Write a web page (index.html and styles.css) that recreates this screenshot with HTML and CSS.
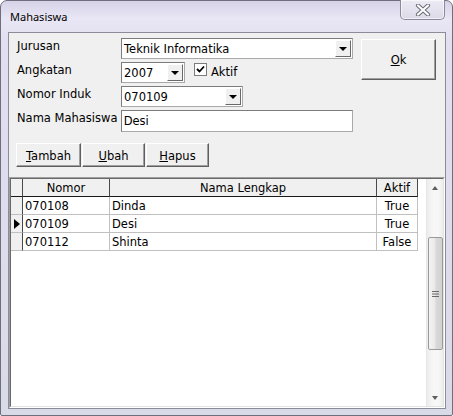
FILE: index.html
```html
<!DOCTYPE html>
<html lang="id">
<head>
    <meta charset="UTF-8">
    <title>Mahasiswa</title>
    <link rel="stylesheet" href="styles.css">
</head>
<body>
<div class="window">
    <div class="titlebar">
        <span class="title">Mahasiswa</span>
        <div class="close">
            <svg width="16" height="12" viewBox="0 0 16 12">
                <path d="M3 1.5 L13 10.5 M13 1.5 L3 10.5" stroke="#6d6d78" stroke-width="4.2" stroke-linecap="round"/>
                <path d="M3 1.5 L13 10.5 M13 1.5 L3 10.5" stroke="#fdfdff" stroke-width="2.2" stroke-linecap="round"/>
            </svg>
        </div>
    </div>
    <div class="client">
        <!--form isian-->
        <div class="form">
            <div class="fields">
                <div class="row">
                    <label class="lbl">Jurusan</label>
                    <div class="combo w-jurusan"><span class="val">Teknik Informatika</span><span class="drop"></span></div>
                </div>
                <div class="row">
                    <label class="lbl">Angkatan</label>
                    <div class="combo w-tahun"><span class="val">2007</span><span class="drop"></span></div>
                    <div class="check">
                        <span class="box">
                            <svg width="11" height="11" viewBox="0 0 11 11"><path d="M2 5 L4.5 7.5 L9 2.5" fill="none" stroke="#000" stroke-width="1.8"/></svg>
                        </span>
                        <span class="val">Aktif</span>
                    </div>
                </div>
                <div class="row">
                    <label class="lbl">Nomor Induk</label>
                    <div class="combo w-nomor"><span class="val">070109</span><span class="drop"></span></div>
                </div>
                <div class="row row-text">
                    <label class="lbl">Nama Mahasiswa</label>
                    <div class="textbox"><span class="val">Desi</span></div>
                </div>
            </div>
            <button class="btn ok"><u>O</u>k</button>
        </div>
        <!--tombol-->
        <div class="toolbar">
            <button class="btn w-tambah"><u>T</u>ambah</button>
            <button class="btn w-ubah"><u>U</u>bah</button>
            <button class="btn w-hapus"><u>H</u>apus</button>
        </div>
        <!--datagrid-->
        <div class="grid">
            <div class="grid-inner">
                <div class="table">
                    <div class="sel head"></div>
                    <div class="th">Nomor</div>
                    <div class="th">Nama Lengkap</div>
                    <div class="th">Aktif</div>

                    <div class="sel"></div>
                    <div class="td">070108</div>
                    <div class="td">Dinda</div>
                    <div class="td mid">True</div>

                    <div class="sel current"></div>
                    <div class="td">070109</div>
                    <div class="td">Desi</div>
                    <div class="td mid">True</div>

                    <div class="sel"></div>
                    <div class="td">070112</div>
                    <div class="td">Shinta</div>
                    <div class="td mid">False</div>
                </div>
                <div class="vscroll">
                    <div class="arrow up"></div>
                    <div class="track">
                        <div class="thumb">
                            <svg width="7" height="8" viewBox="0 0 7 8"><path d="M0 1.5 H7 M0 4 H7 M0 6.5 H7" stroke="#6a6a6a" stroke-width="1"/></svg>
                        </div>
                    </div>
                    <div class="arrow down"></div>
                </div>
            </div>
        </div>
    </div>
</div>
</body>
</html>
```

FILE: styles.css
```css
* {
    margin: 0;
    padding: 0;
    box-sizing: border-box;
}

body {
    width: 453px;
    height: 416px;
    overflow: hidden;
    font-family: "DejaVu Sans", sans-serif;
    font-size: 11.5px;
    color: #000;
    background: #fff;
}

.window {
    width: 453px;
    height: 416px;
    display: flex;
    flex-direction: column;
    padding: 0 6px 6px 7px;
    border: 1px solid #6e6e7c;
    border-radius: 7px 7px 2px 2px;
    background: linear-gradient(to bottom, #d6d3e8 0, #e9e6f5 18px, #e2dff0 40px, #d9dae8 100%);
}

.titlebar {
    height: 31px;
    display: flex;
    justify-content: space-between;
    align-items: flex-start;
}

.title {
    font-family: "Noto Sans", sans-serif;
    font-size: 11px;
    line-height: 15px;
    padding: 8px 0 0 2px;
}

.close {
    width: 45px;
    height: 20px;
    margin: -1px 1px 0 0;
    display: flex;
    align-items: center;
    justify-content: center;
    border: 1px solid #8b8a99;
    border-top: none;
    border-radius: 0 0 5px 5px;
    background: linear-gradient(to bottom, #ecebf4, #dcdae8);
    box-shadow: inset 0 0 0 1px rgba(255, 255, 255, 0.6);
}

.client {
    flex: 1;
    display: flex;
    flex-direction: column;
    border: 1px solid #8c8b99;
    background-color: #f0f0f0;
}

.form {
    display: flex;
    padding: 5px 0 0 8px;
}

.fields {
    width: 336px;
    display: flex;
    flex-direction: column;
    gap: 3px;
}

.row {
    display: flex;
    height: 21px;
}

.row-text {
    height: 22px;
}

.lbl {
    width: 104px;
    line-height: 17px;
}

.combo,
.textbox {
    display: flex;
    height: 21px;
    border: 1px solid #909090;
    border-color: #7c7c7c #a9a9a9 #a9a9a9 #7c7c7c;
    background-color: #fff;
}

.textbox {
    height: 22px;
    width: 233px;
}

.val {
    flex: 1;
    padding: 1px 0 0 2px;
    line-height: 18px;
    white-space: nowrap;
}

.w-jurusan {
    width: 232px;
}

.w-tahun {
    width: 64px;
}

.w-nomor {
    width: 122px;
}

.drop {
    width: 16px;
    height: 17px;
    margin: 1px 1px 0 0;
    display: flex;
    align-items: center;
    justify-content: center;
    border: 1px solid;
    border-color: #fff #696969 #696969 #fff;
    background-color: #f0f0f0;
}

.drop::after {
    content: "";
    border-style: solid;
    border-width: 4px 4px 0 4px;
    border-color: #000 transparent transparent transparent;
    margin-top: 1px;
}

.check {
    display: flex;
    margin-left: 9px;
}

.check .box {
    width: 13px;
    height: 13px;
    margin-top: 1px;
    display: flex;
    align-items: center;
    justify-content: center;
    border: 1px solid #7c7c7c;
    background-color: #fff;
}

.check .val {
    padding-left: 4px;
}

.btn {
    font-family: "DejaVu Sans", sans-serif;
    font-size: 11.5px;
    color: #000;
    background-color: #f0f0f0;
    border: 1px solid;
    border-color: #fff #5f5f5f #5f5f5f #fff;
    box-shadow: inset -1px -1px 0 #a0a0a0;
    padding-top: 1px;
}

.ok {
    width: 75px;
    height: 41px;
    margin: 1px 0 0 8px;
}

.toolbar {
    display: flex;
    gap: 1px;
    padding: 11px 0 0 7px;
}

.toolbar .btn {
    height: 24px;
}

.w-tambah {
    width: 65px;
}

.w-ubah,
.w-hapus {
    width: 63px;
}

.grid {
    flex: 1;
    margin-top: 10px;
    border: 1px solid;
    border-color: #a0a0a0 #fff #fff #a0a0a0;
    display: flex;
}

.grid-inner {
    flex: 1;
    display: flex;
    border: 1px solid;
    border-color: #696969 #e3e3e3 #e3e3e3 #696969;
    background-color: #fff;
}

.table {
    flex: 1;
    align-self: flex-start;
    display: grid;
    grid-template-columns: 12px 87px 267px 41px;
    grid-auto-rows: 18px;
}

.sel,
.th,
.td {
    border-right: 1px solid #c0c0c0;
    border-bottom: 1px solid #c0c0c0;
    padding-top: 2px;
    line-height: 15px;
    white-space: nowrap;
    overflow: hidden;
}

.th {
    text-align: center;
    background-color: #f0f0f0;
    border-right-color: #4a4a4a;
    border-bottom-color: #1a1a1a;
}

.td {
    padding-left: 2px;
}

.td.mid {
    text-align: center;
    padding-left: 0;
}

.sel {
    background-color: #f0f0f0;
    border-right-color: #4a4a4a;
    display: flex;
    align-items: center;
    justify-content: center;
    padding-top: 0;
}

.sel.head {
    border-bottom-color: #1a1a1a;
}

.current::after {
    content: "";
    border-style: solid;
    border-width: 5px 0 5px 6px;
    border-color: transparent transparent transparent #000;
    margin-left: 1px;
}

.vscroll {
    width: 17px;
    display: flex;
    flex-direction: column;
    border-left: 1px solid #e6e6e6;
    background: linear-gradient(to right, #ececec, #f7f7f7 40%, #f7f7f7 70%, #ededed);
}

.arrow {
    height: 17px;
    display: flex;
    align-items: center;
    justify-content: center;
}

.arrow::after {
    content: "";
    border-style: solid;
}

.up::after {
    border-width: 0 3px 4px 3px;
    border-color: transparent transparent #5e5e5e transparent;
}

.down::after {
    border-width: 4px 3px 0 3px;
    border-color: #5e5e5e transparent transparent transparent;
}

.track {
    flex: 1;
    padding: 41px 0 0 1px;
}

.thumb {
    width: 15px;
    height: 113px;
    display: flex;
    align-items: center;
    justify-content: center;
    border: 1px solid #9a9a9a;
    border-radius: 2px;
    background: linear-gradient(to right, #f4f4f4, #e9e9e9 45%, #d8d8d8 55%, #d2d2d2);
}
```
